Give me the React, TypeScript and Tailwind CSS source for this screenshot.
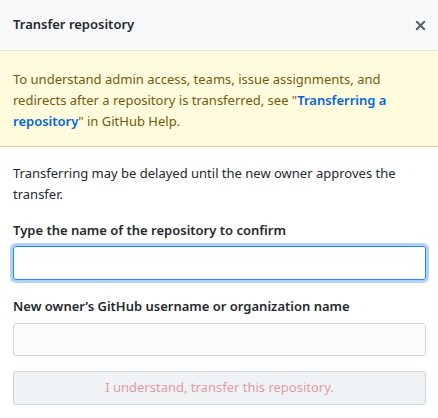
import { X } from 'lucide-react'

export default function App() {
  return (
    <div className="w-[438px] h-[418px] bg-white text-[13px] text-[#24292e] font-['Segoe_UI','Noto_Sans',sans-serif] overflow-hidden">
      {/* header */}
      <div className="h-[51px] bg-[#f6f8fa] border-b border-[#e1e4e8] flex items-center justify-between pl-[13px] pr-[10px]">
        <h3 className="font-semibold text-[13px]">Transfer repository</h3>
        <button className="text-[#586069]">
          <X size={15} strokeWidth={3.2} />
        </button>
      </div>

      {/* flash notice */}
      <div className="h-[96px] bg-[#fffbdd] border-b border-[#d9d0a5] px-[13px] pt-[18px] leading-[21px] text-[#735c0f]">
        To understand admin access, teams, issue assignments, and redirects after a repository is transferred, see "
        <a className="font-semibold text-[#0366d6]">Transferring a repository</a>" in GitHub Help.
      </div>

      {/* body */}
      <div className="px-[13px] pr-[12px] pt-[16px]">
        <p className="leading-[21px] pr-[20px]">Transferring may be delayed until the new owner approves the transfer.</p>

        <div className="mt-[15px]">
          <label className="block font-semibold leading-[21px]">Type the name of the repository to confirm</label>
          <input className="mt-[5px] w-full h-[34px] rounded-[3px] border border-[#2188ff] shadow-[0_0_0_3px_rgba(3,102,214,0.3)] outline-none px-2" />
        </div>

        <div className="mt-[16px]">
          <label className="block font-semibold leading-[21px]">New owner’s GitHub username or organization name</label>
          <input
            disabled
            className="mt-[6px] w-full h-[33px] rounded-[3px] border border-[#d1d5da] bg-[#fafbfc] px-2"
          />
        </div>

        <button
          disabled
          className="mt-[15px] w-full h-[34px] rounded-[3px] border border-[#d1d5da] bg-[#eff3f6] text-[#e59aa0]"
        >
          I understand, transfer this repository.
        </button>
      </div>
    </div>
  )
}
